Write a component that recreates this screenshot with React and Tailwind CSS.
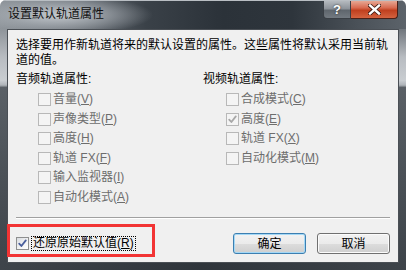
import React from "react";

const FONT = { fontFamily: '"Liberation Sans","Noto Sans CJK SC",sans-serif' };

function Box({ checked, disabled }) {
  return (
    <span
      className={
        "relative inline-flex h-[13px] w-[13px] shrink-0 items-center justify-center border " +
        (disabled
          ? "border-[#b8b8b8] bg-[#f4f4f4]"
          : "border-[#8e8f8f] bg-[linear-gradient(135deg,#d9dce1_0%,#f4f4f4_60%,#ffffff_100%)]")
      }
    >
      {checked && (
        <svg width="11" height="11" viewBox="0 0 11 11" className="absolute">
          <path
            d="M2.2 5.6 L4.4 8 L8.8 2.4"
            fill="none"
            stroke={disabled ? "#a8a8a8" : "#4a5f9c"}
            strokeWidth="1.8"
            strokeLinecap="round"
            strokeLinejoin="round"
          />
        </svg>
      )}
    </span>
  );
}

function Label({ text, k, color }) {
  return (
    <span style={{ color }}>
      {text}(<span className="underline underline-offset-[1px]">{k}</span>)
    </span>
  );
}

function Row({ text, k, checked, indent }) {
  return (
    <div className={"flex h-[19.5px] items-center gap-[2px] " + indent}>
      <Box checked={checked} disabled />
      <Label text={text} k={k} color="#6d6d6d" />
    </div>
  );
}

export default function App() {
  const audio = [
    ["音量", "V"],
    ["声像类型", "P"],
    ["高度", "H"],
    ["轨道 FX", "F"],
    ["输入监视器", "I"],
    ["自动化模式", "A"],
  ];
  const video = [
    ["合成模式", "C", false],
    ["高度", "E", true],
    ["轨道 FX", "X", false],
    ["自动化模式", "M", false],
  ];
  return (
    <div
      className="relative flex h-[270px] w-[406px] flex-col overflow-hidden rounded-t-[6px] bg-[linear-gradient(90deg,#8a9096_0%,#6a7077_18%,#3a4148_36%,#2b3239_55%,#2e353c_72%,#4a5158_88%,#5c636a_100%)] text-[12px] leading-[15px]"
      style={FONT}
    >
      {/* title bar */}
      <div className="flex h-[29px] shrink-0 items-start justify-between border-t border-[#b9bec3] bg-[radial-gradient(ellipse_95px_20px_at_58px_14px,rgba(200,205,210,0.95)_0%,rgba(170,176,182,0.6)_55%,rgba(120,126,132,0)_100%)]">
        <div className="ml-[8px] mt-[6px] text-[12px] leading-[15px] text-[#101010]">设置默认轨道属性</div>
        <div className="mr-[8px] flex">
          <div className="flex h-[18px] w-[28px] items-center justify-center rounded-bl-[4px] border border-t-0 border-[#3a3f45] bg-[linear-gradient(180deg,#b4b9be_0%,#8d939a_45%,#5f666d_55%,#727980_100%)] text-[13px] font-bold leading-none text-white [text-shadow:0_0_2px_#222]">
            ?
          </div>
          <div className="flex h-[18px] w-[47px] items-center justify-center rounded-br-[4px] border border-l-0 border-t-0 border-[#4a2018] bg-[linear-gradient(180deg,#e6a894_0%,#d86a50_40%,#c0401f_55%,#d4623f_100%)]">
            <svg width="13" height="11" viewBox="0 0 13 11">
              <path d="M2 1.5 L11 9.5 M11 1.5 L2 9.5" stroke="#3a1a12" strokeWidth="4" strokeLinecap="square" />
              <path d="M2 1.5 L11 9.5 M11 1.5 L2 9.5" stroke="#ffffff" strokeWidth="2.4" strokeLinecap="square" />
            </svg>
          </div>
        </div>
      </div>

      {/* body with side strips */}
      <div className="flex h-[234px] shrink-0">
        <div className="w-[7px] bg-[linear-gradient(180deg,#8e949a_0%,#b8bcc1_12%,#c9cdd1_22%,#aeb3b8_24%,#5a6066_25%,#4c5258_60%,#3e444a_100%)]" />
        <div className="flex w-[392px] flex-col border border-[#4a4f55] bg-[#f0f0f0] px-[8px] pt-[8px] text-black">
          <div className="h-[30px]">
            选择要用作新轨道将来的默认设置的属性。这些属性将默认采用当前轨
            <br />
            道的值。
          </div>
          <div className="mt-[4px] grid grid-cols-[187px_1fr]">
            <div>
              <div className="h-[15px]">音频轨道属性:</div>
              <div className="mt-[3px]">
                {audio.map(([t, k]) => (
                  <Row key={t + k} text={t} k={k} indent="ml-[22px]" />
                ))}
              </div>
            </div>
            <div>
              <div className="h-[15px]">视频轨道属性:</div>
              <div className="mt-[3px]">
                {video.map(([t, k, c]) => (
                  <Row key={t + k} text={t} k={k} checked={c} indent="ml-[23px]" />
                ))}
              </div>
            </div>
          </div>
          <div className="mt-[10px] h-[2px] border-t border-b border-t-[#a0a0a0] border-b-white" />
          <div className="mt-[14px] flex h-[21px] items-center">
            <div className="flex items-center gap-[2px]">
              <Box checked />
              <span className="border border-dotted border-black px-[1px] leading-[13px]">
                还原原始默认值(<span className="underline underline-offset-[1px]">R</span>)
              </span>
            </div>
            <div className="ml-auto flex gap-[11px]">
              <button className="flex h-[21px] w-[73px] items-center justify-center rounded-[3px] border border-[#3c7fb1] bg-[linear-gradient(180deg,#f2f2f2_0%,#ebebeb_50%,#dddddd_51%,#cfcfcf_100%)] shadow-[inset_0_0_0_1px_#a4d8f6] text-[12px] leading-none text-black">
                确定
              </button>
              <button className="flex h-[21px] w-[73px] items-center justify-center rounded-[3px] border border-[#707070] bg-[linear-gradient(180deg,#f2f2f2_0%,#ebebeb_50%,#dddddd_51%,#cfcfcf_100%)] shadow-[inset_0_0_0_1px_#fbfbfb] text-[12px] leading-none text-black">
                取消
              </button>
            </div>
          </div>
        </div>
        <div className="w-[7px] bg-[linear-gradient(180deg,#70767c_0%,#b8bcc1_12%,#c9cdd1_22%,#aeb3b8_24%,#5a6066_25%,#4c5258_60%,#3e444a_100%)]" />
      </div>
      <div className="h-[7px] shrink-0 bg-[linear-gradient(90deg,#3e444a,#2f353b_50%,#3e444a)]" />

      {/* red annotation rectangle */}
      <div className="pointer-events-none absolute left-[7px] top-[224px] h-[33px] w-[148px] border-[3px] border-[#f23434]" />
    </div>
  );
}
